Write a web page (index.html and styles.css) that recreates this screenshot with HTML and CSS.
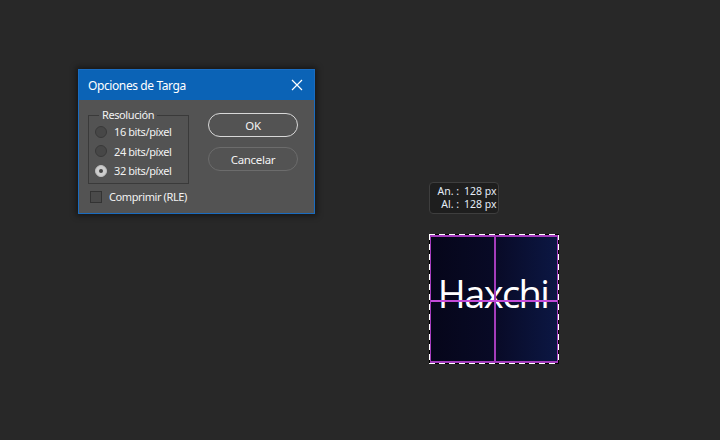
FILE: index.html
```html
<!DOCTYPE html>
<html lang="es">
<head>
<meta charset="utf-8">
<link rel="stylesheet" href="styles.css">
</head>
<body>
<div class="workspace">
  <div class="dialog">
    <div class="titlebar">
      <span class="title">Opciones de Targa</span>
      <svg class="close" width="12" height="12" viewBox="0 0 12 12"><path d="M1 1 L11 11 M11 1 L1 11" stroke="#fff" stroke-width="1.2" fill="none"/></svg>
    </div>
    <div class="body">
      <div class="left">
        <fieldset class="group">
          <legend>Resolución</legend>
          <label class="radio-row"><span class="radio"></span>16 bits/píxel</label>
          <label class="radio-row"><span class="radio"></span>24 bits/píxel</label>
          <label class="radio-row"><span class="radio checked"></span>32 bits/píxel</label>
        </fieldset>
        <label class="check-row"><span class="checkbox"></span>Comprimir (RLE)</label>
      </div>
      <div class="buttons">
        <button class="btn primary">OK</button>
        <button class="btn">Cancelar</button>
      </div>
    </div>
  </div>

  <div class="tooltip">
    <div class="tip-row"><span class="tip-key">An. :</span><span>128 px</span></div>
    <div class="tip-row"><span class="tip-key">Al. :</span><span>128 px</span></div>
  </div>

  <div class="artboard">
    <div class="art">
      <span class="art-text">Haxchi</span>
      <span class="guide-v"></span>
      <span class="guide-h"></span>
    </div>
  </div>
</div>
</body>
</html>
```

FILE: styles.css
```css
html, body {
  margin: 0;
  padding: 0;
  background: #282828;
  width: 720px;
  height: 440px;
  overflow: hidden;
  font-family: "Noto Sans", "Open Sans", "DejaVu Sans", sans-serif;
}
.workspace {
  position: relative;
  width: 720px;
  height: 440px;
}
.dialog {
  position: absolute;
  left: 78px;
  top: 69px;
  width: 235px;
  height: 143px;
  border: 1px solid #1a6cc0;
  background: #535353;
  box-shadow: 0 0 6px 2px rgba(0,0,0,0.45);
  display: flex;
  flex-direction: column;
}
.titlebar {
  height: 30px;
  background: #0b63b6;
  display: flex;
  align-items: center;
  justify-content: space-between;
  padding: 0 11px 0 9px;
  color: #fff;
  flex-shrink: 0;
}
.title {
  font-size: 12px;
  letter-spacing: -0.4px;
}
.close { display: block; }
.body {
  display: flex;
  padding: 9px 16px 0 9px;
  color: #f2f2f2;
  font-size: 11px;
  letter-spacing: -0.4px;
}
.left {
  display: flex;
  flex-direction: column;
}
.group {
  margin: 0;
  width: 101px;
  height: 75px;
  box-sizing: border-box;
  border: 1px solid #3a3a3a;
  padding: 2px 0 0 6px;
  display: flex;
  flex-direction: column;
  gap: 2.5px;
}
.group legend {
  padding: 0 3px;
  margin-left: 4px;
  font-size: 11px;
  color: #f2f2f2;
  line-height: 12px;
}
.radio-row, .check-row {
  display: flex;
  align-items: center;
  gap: 7px;
  height: 17px;
}
.radio {
  width: 12px;
  height: 12px;
  box-sizing: border-box;
  border-radius: 50%;
  background: #474747;
  border: 1px solid #393939;
  flex-shrink: 0;
}
.radio.checked {
  background: #cdcdcd;
  border-color: #bdbdbd;
  display: flex;
  align-items: center;
  justify-content: center;
}
.radio.checked::after {
  content: "";
  width: 4px;
  height: 4px;
  border-radius: 50%;
  background: #444;
}
.check-row {
  margin-top: 4px;
  margin-left: 2px;
}
.checkbox {
  width: 12px;
  height: 12px;
  box-sizing: border-box;
  background: #4a4a4a;
  border: 1px solid #333;
}
.buttons {
  margin-left: auto;
  display: flex;
  flex-direction: column;
  gap: 10px;
  padding-top: 4px;
}
.btn {
  width: 90px;
  height: 24px;
  border-radius: 12px;
  background: #535353;
  border: 1px solid #6c6c6c;
  color: #f2f2f2;
  font-family: inherit;
  font-size: 11.5px;
  letter-spacing: -0.3px;
  padding: 0;
}
.btn.primary {
  border: 1.5px solid #d8d8d8;
}
.tooltip {
  position: absolute;
  left: 429px;
  top: 182px;
  width: 70px;
  height: 32px;
  box-sizing: border-box;
  background: #1e1e1e;
  border: 1px solid #3e3e3e;
  border-radius: 4px;
  color: #e4ecf7;
  font-size: 10.5px;
  padding: 2px 0 0 0;
  line-height: 13px;
}
.tip-row {
  display: flex;
  gap: 5px;
}
.tip-key {
  width: 29px;
  text-align: right;
}
.artboard {
  position: absolute;
  left: 429px;
  top: 234px;
  width: 130px;
  height: 130px;
  box-sizing: border-box;
  padding: 1px;
  background:
    repeating-linear-gradient(90deg, #fff 0 6px, #000 6px 10px) top left / 100% 1px no-repeat,
    repeating-linear-gradient(90deg, #fff 0 6px, #000 6px 10px) bottom left / 100% 1px no-repeat,
    repeating-linear-gradient(180deg, #fff 0 6px, #000 6px 10px) top left / 1px 100% no-repeat,
    repeating-linear-gradient(180deg, #fff 0 6px, #000 6px 10px) top right / 1px 100% no-repeat,
    #000;
}
.art {
  position: relative;
  width: 128px;
  height: 128px;
  box-sizing: border-box;
  border: 1px solid #a43cbc;
  border-top-width: 2px;
  border-bottom-width: 2px;
  background: linear-gradient(90deg, #06061a 0%, #080a26 50%, #0c1743 100%);
  overflow: hidden;
  display: flex;
  align-items: center;
  justify-content: center;
}
.art-text {
  color: #ffffff;
  font-family: "Open Sans", "Noto Sans", sans-serif;
  font-weight: 400;
  font-size: 38px;
  line-height: 1;
  letter-spacing: -1.6px;
  position: relative;
  top: -6px;
  left: -1px;
}
.guide-v {
  position: absolute;
  left: 63px;
  top: 0;
  bottom: 0;
  width: 2px;
  background: #a43cbc;
}
.guide-h {
  position: absolute;
  top: 63px;
  left: 0;
  right: 0;
  height: 2px;
  background: #c24ad8;
}
```
